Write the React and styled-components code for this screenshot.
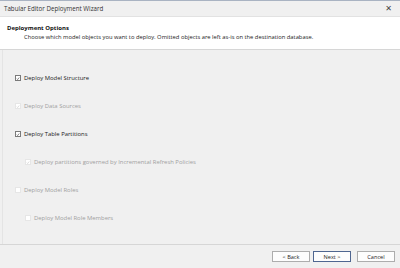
import React from "react";
import styled, { createGlobalStyle } from "styled-components";

const Global = createGlobalStyle`
  html, body { margin: 0; padding: 0; background: #f0f0f0; }
  body { font-family: "Open Sans", "Noto Sans", sans-serif; }
`;

const Window = styled.div`
  width: 400px;
  height: 268px;
  display: flex;
  flex-direction: column;
  box-sizing: border-box;
  border-top: 1px solid #a9b3c2;
  background: #f0f0f0;
  overflow: hidden;
`;

const TitleBar = styled.div`
  height: 15px;
  display: flex;
  align-items: center;
  justify-content: space-between;
  padding: 0 8px 0 4px;
  background: #f0f0f0;
  border-bottom: 1px solid #e2e2e2;
  color: #333;
  font-size: 6.2px;
`;

const Close = styled.span`
  font-family: "DejaVu Sans", sans-serif;
  font-size: 8px;
  color: #444;
`;

const Header = styled.div`
  height: 33px;
  background: #ffffff;
  border-bottom: 1px solid #d6d6d6;
  padding: 7px 0 0 7px;
  box-sizing: border-box;
`;

const HeaderTitle = styled.div`
  font-weight: 700;
  font-size: 6px;
  color: #111;
  line-height: 9px;
`;

const HeaderSub = styled.div`
  font-size: 5.8px;
  color: #1a1a1a;
  line-height: 9px;
  padding-left: 17px;
`;

const Main = styled.div`
  flex: 1;
  display: flex;
  border-bottom: 1px solid #d6d6d6;
`;

const Edge = styled.div`
  width: 1px;
  margin-left: 2px;
  background: #e4e4e4;
`;

const Body = styled.div`
  flex: 1;
  display: flex;
  flex-direction: column;
  gap: 20px;
  padding: 24px 0 0 12px;
`;

const Row = styled.label`
  display: flex;
  align-items: center;
  gap: 3px;
  height: 8px;
  padding-left: ${(p) => (p.$indent ? "10px" : "0")};
  font-size: 5.9px;
  color: ${(p) => (p.$disabled ? "#a0a0a0" : "#1a1a1a")};
`;

const Box = styled.span`
  width: 6px;
  height: 6px;
  box-sizing: border-box;
  background: #fff;
  border: 1px solid ${(p) => (p.$disabled ? "#e6e6e6" : p.$blank ? "#f6f6f6" : "#7a7a7a")};
  display: flex;
  align-items: center;
  justify-content: center;
`;

const Footer = styled.div`
  height: 23px;
  display: flex;
  justify-content: flex-end;
  align-items: center;
  gap: 3px;
  padding-right: 5px;
`;

const Button = styled.div`
  width: 38px;
  height: 11px;
  box-sizing: border-box;
  border: 1px solid ${(p) => (p.$primary ? "#4f6690" : "#adadad")};
  background: #fdfdfd;
  display: flex;
  align-items: center;
  justify-content: center;
  font-size: 5.6px;
  color: #222;
  margin-left: ${(p) => (p.$gap ? "3px" : "0")};
`;

const Check = ({ color }) => (
  <svg width="5" height="5" viewBox="0 0 10 10">
    <path d="M2 5.5 L4 7.5 L8 2.5" fill="none" stroke={color} strokeWidth="1.5" />
  </svg>
);

const Item = ({ label, checked, disabled, indent, blank }) => (
  <Row $disabled={disabled} $indent={indent}>
    <Box $disabled={disabled} $blank={blank}>
      {checked && <Check color={disabled ? "#c4c4c4" : "#333"} />}
    </Box>
    {label}
  </Row>
);

export default function App() {
  return (
    <>
      <Global />
      <Window>
        <TitleBar>
          <span>Tabular Editor Deployment Wizard</span>
          <Close>✕</Close>
        </TitleBar>
        <Header>
          <HeaderTitle>Deployment Options</HeaderTitle>
          <HeaderSub>
            Choose which model objects you want to deploy. Omitted objects are left as-is on the destination database.
          </HeaderSub>
        </Header>
        <Main>
          <Edge />
          <Body>
            <Item label="Deploy Model Structure" checked />
            <Item label="Deploy Data Sources" checked disabled />
            <Item label="Deploy Table Partitions" checked />
            <Item label="Deploy partitions governed by Incremental Refresh Policies" checked disabled indent />
            <Item label="Deploy Model Roles" disabled blank />
            <Item label="Deploy Model Role Members" disabled blank indent />
          </Body>
        </Main>
        <Footer>
          <Button>&lt; Back</Button>
          <Button $primary>Next &gt;</Button>
          <Button $gap>Cancel</Button>
        </Footer>
      </Window>
    </>
  );
}
